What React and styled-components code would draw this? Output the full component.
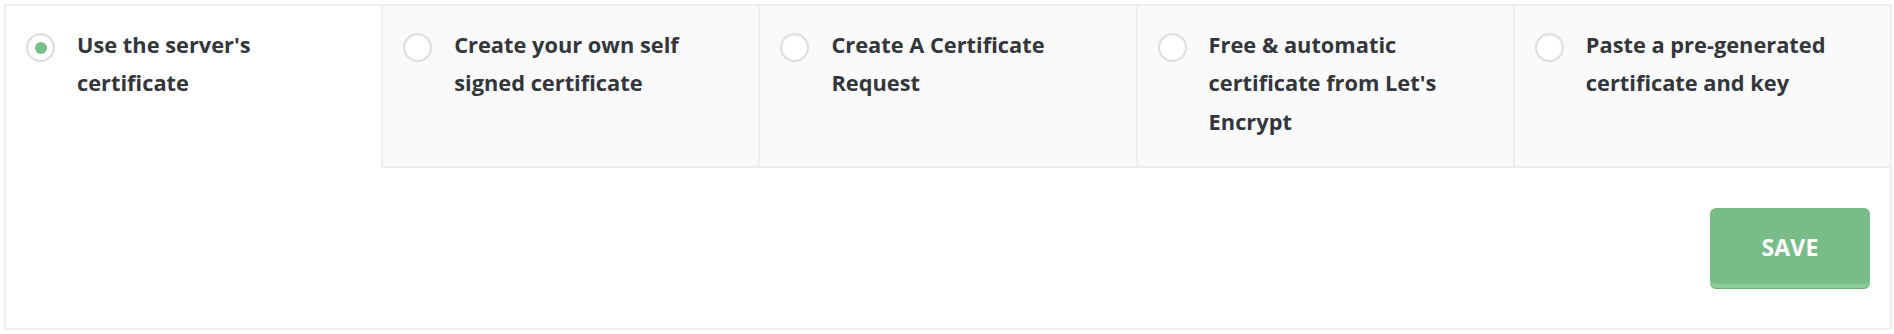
import React, { useState } from "react";
import styled, { createGlobalStyle } from "styled-components";

const GlobalStyle = createGlobalStyle`
  html, body {
    margin: 0;
    padding: 0;
    background: #ffffff;
  }
  body {
    font-family: "Open Sans", "Noto Sans", "Liberation Sans", sans-serif;
  }
  * { box-sizing: border-box; }
`;

const Panel = styled.div`
  margin: 4px;
  width: 1888px;
  height: 326px;
  border: 2px solid #eeeeee;
  background: #ffffff;
  display: flex;
  flex-direction: column;
`;

const Tabs = styled.div`
  display: flex;
  height: 162px;
`;

const Tab = styled.label`
  flex: 1 1 0;
  min-width: 0;
  display: flex;
  align-items: flex-start;
  gap: 22px;
  padding: 20px 20px 0 20px;
  background: ${(p) => (p.$active ? "#ffffff" : "#fafafa")};
  border-bottom: 2px solid ${(p) => (p.$active ? "transparent" : "#eeeeee")};
  border-left: ${(p) => (p.$first ? "none" : "2px solid #eeeeee")};
  cursor: pointer;
`;

const Radio = styled.span`
  flex: 0 0 auto;
  width: 29px;
  height: 29px;
  margin-top: 7px;
  border-radius: 50%;
  border: 2px solid #dedede;
  background: #ffffff;
  box-shadow: inset 0 1px 2px rgba(0, 0, 0, 0.06);
  display: flex;
  align-items: center;
  justify-content: center;

  &::after {
    content: "";
    width: 12px;
    height: 12px;
    border-radius: 50%;
    background: ${(p) => (p.$checked ? "#76c088" : "transparent")};
  }
`;

const Label = styled.span`
  max-width: 256px;
  font-size: 21.8px;
  line-height: 38.4px;
  font-weight: 700;
  color: #33363b;
`;

const Footer = styled.div`
  flex: 1;
  display: flex;
  justify-content: flex-end;
  align-items: flex-start;
  padding: 40px 20px 0 20px;
`;

const SaveButton = styled.button`
  width: 160px;
  height: 80px;
  border: none;
  border-radius: 6px;
  background: #78bd88;
  box-shadow: inset 0 -4px 0 #8acb99, 0 1px 0 #6fb27f;
  color: #ffffff;
  font-family: "Open Sans", "Noto Sans", "Liberation Sans", sans-serif;
  font-size: 23px;
  font-weight: 700;
  letter-spacing: 0.2px;
  padding: 0 0 2px 0;
  cursor: pointer;
`;

const options = [
  "Use the server's certificate",
  "Create your own self signed certificate",
  "Create A Certificate Request",
  "Free & automatic certificate from Let's Encrypt",
  "Paste a pre-generated certificate and key",
];

export default function App() {
  const [selected, setSelected] = useState(0);
  return (
    <>
      <GlobalStyle />
      <Panel>
        <Tabs>
          {options.map((text, i) => (
            <Tab
              key={text}
              $active={i === selected}
              $first={i === 0}
              onClick={() => setSelected(i)}
            >
              <Radio $checked={i === selected} />
              <Label>{text}</Label>
            </Tab>
          ))}
        </Tabs>
        <Footer>
          <SaveButton type="button">SAVE</SaveButton>
        </Footer>
      </Panel>
    </>
  );
}
